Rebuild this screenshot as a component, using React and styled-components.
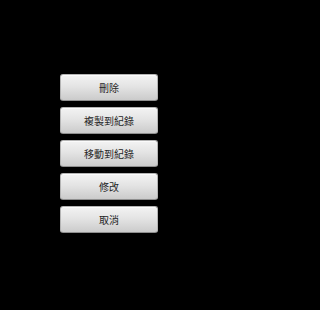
import React from "react";
import styled, { createGlobalStyle } from "styled-components";

const Global = createGlobalStyle`
  html, body { margin: 0; padding: 0; background: #000; }
  body { width: 218px; height: 310px; overflow: hidden; }
`;

const Screen = styled.div`
  width: 218px;
  height: 310px;
  background: #000;
  display: flex;
  flex-direction: column;
  align-items: center;
  padding-top: 74px;
  box-sizing: border-box;
  gap: 6px;
`;

const Button = styled.button`
  width: 98px;
  height: 27px;
  box-sizing: border-box;
  border: 1px solid #b4b4b4;
  border-bottom-color: #8e8e8e;
  border-radius: 3px;
  background: linear-gradient(to bottom, #f3f3f3 0%, #e4e4e4 45%, #cbcbcb 100%);
  box-shadow: inset 0 1px 0 #fbfbfb;
  color: #262626;
  font-family: "Noto Sans CJK TC", "Noto Sans CJK SC", sans-serif;
  font-size: 10px;
  line-height: 1;
  padding: 0;
  display: flex;
  align-items: center;
  justify-content: center;
`;

const labels = ["刪除", "複製到紀錄", "移動到紀錄", "修改", "取消"];

export default function App() {
  return (
    <>
      <Global />
      <Screen>
        {labels.map((l) => (
          <Button key={l}>{l}</Button>
        ))}
      </Screen>
    </>
  );
}
